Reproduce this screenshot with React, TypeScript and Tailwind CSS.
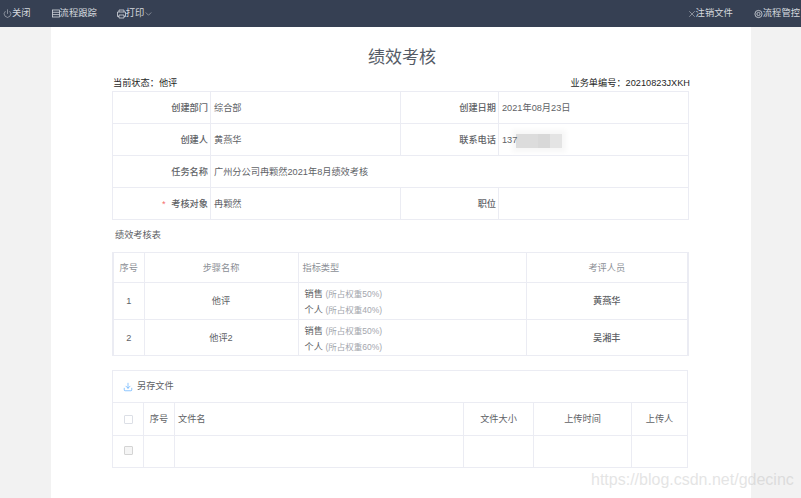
import { ChevronDown, Download, Power, X } from "lucide-react";

const font = { fontFamily: '"Liberation Sans", "Noto Sans CJK SC", sans-serif' };

const box = "border border-[#ebecf3] align-middle";
const td = `${box} pt-[2px]`;
const label = `${td} text-right pr-[2px] font-medium text-[#606266]`;
const value = `${td} text-left pl-[3px] text-[#606266]`;

const flows = [
    { no: 1, name: "他评", second: "个人", pct: "40%", person: "黄燕华", rowH: "h-[37px]" },
    { no: 2, name: "他评2", second: "个人", pct: "60%", person: "吴湘丰", rowH: "h-[36px]" },
];

const App = () => {
    return (
        <div className="flex flex-col w-[801px] h-[498px] overflow-hidden bg-[#f2f2f2] text-[9.2px] relative" style={font}>
            {/* top bar */}
            <div className="flex items-center justify-between h-[27px] bg-[#364053] text-[#d5d9df] text-[9.3px] shrink-0">
                <div className="flex items-center">
                    <span className="flex items-center ml-[3px]"><Power size={9} strokeWidth={1.4} />关闭</span>
                    <span className="flex items-center ml-[21px]">
                        <svg width="8" height="9" viewBox="0 0 8 9" fill="none" stroke="currentColor" strokeWidth="0.8"><rect x="0.5" y="1" width="7" height="7" /><path d="M0.5 3.3h7M0.5 5.6h7" /></svg>
                        流程跟踪
                    </span>
                    <span className="flex items-center ml-[20px]">
                        <svg width="9" height="10" viewBox="0 0 9 10" fill="none" stroke="currentColor" strokeWidth="0.8"><path d="M2 3V1h5v2M2 7.5H.5V3h8v4.5H7M2 6h5v3H2z" /></svg>
                        打印
                        <ChevronDown size={10} strokeWidth={1.1} className="ml-[-1px] w-[11px] text-[#e2e5ea]" />
                    </span>
                </div>
                <div className="flex items-center mr-[1px]">
                    <span className="flex items-center"><X size={10} strokeWidth={1.2} className="mr-[-1px]" />注销文件</span>
                    <span className="flex items-center ml-[21px]">
                        <svg width="9" height="10" viewBox="0 0 10 10" fill="none" stroke="currentColor" strokeWidth="0.9"><circle cx="5" cy="5" r="4" /><circle cx="5" cy="5" r="1.8" /></svg>
                        流程管控
                    </span>
                </div>
            </div>

            {/* paper */}
            <div className="ml-[51px] w-[700px] flex-1 bg-white pl-[61px] pr-[62px]">
                <h1 className="text-[17px] leading-[24px] font-normal text-center text-[#555b66] mt-[19px] ml-[3px]">绩效考核</h1>
                <div className="flex justify-between mt-[6px] h-[15px] items-center text-[#1f1f1f] -mr-[1px] ml-[1px]">
                    <span>当前状态：他评</span>
                    <span>业务单编号：20210823JXKH</span>
                </div>

                <table className="table-fixed border-collapse w-[576px]">
                    <colgroup>
                        <col className="w-[98px]" />
                        <col className="w-[190px]" />
                        <col className="w-[98px]" />
                        <col className="w-[190px]" />
                    </colgroup>
                    <tbody>
                        <tr className="h-[32px]">
                            <td className={label}>创建部门</td>
                            <td className={value}>综合部</td>
                            <td className={label}>创建日期</td>
                            <td className={value}>2021年08月23日</td>
                        </tr>
                        <tr className="h-[32px]">
                            <td className={label}>创建人</td>
                            <td className={value}>黄燕华</td>
                            <td className={label}>联系电话</td>
                            <td className={value}>
                                <span className="flex items-center">
                                    <span className="relative z-10">137</span>
                                    {/* blurred phone number */}
                                    <span className="flex h-[14px] -ml-[1px] shadow-[0_0_5px_4px_#f7f7f7]">
                                        <span className="w-[22px] bg-[#dcdcdc]" />
                                        <span className="w-[12px] bg-[#d8d8d8]" />
                                        <span className="w-[12px] bg-[#e4e4e4]" />
                                    </span>
                                </span>
                            </td>
                        </tr>
                        <tr className="h-[32px]">
                            <td className={label}>任务名称</td>
                            <td className={value} colSpan={3}>广州分公司冉颗然2021年8月绩效考核</td>
                        </tr>
                        <tr className="h-[32px]">
                            <td className={label}><span className="text-[#f56c6c] mr-[3px]">*</span> 考核对象</td>
                            <td className={value}>冉颗然</td>
                            <td className={label}>职位</td>
                            <td className={value}></td>
                        </tr>
                    </tbody>
                </table>

                <div className="h-[32px] flex items-center pl-[3px] text-[#606266]">绩效考核表</div>

                <table className="table-fixed border-collapse w-[576px] border-l-2 border-r-2 border-[#ebecf3] text-[#606266]">
                    <colgroup>
                        <col className="w-[31px]" />
                        <col className="w-[154px]" />
                        <col className="w-[228px]" />
                        <col className="w-[162px]" />
                    </colgroup>
                    <thead>
                        <tr className="h-[30px] text-[#8c8f96]">
                            <th className={`${td} font-normal`}>序号</th>
                            <th className={`${td} font-normal`}>步骤名称</th>
                            <th className={`${td} font-normal text-left pl-[4px]`}>指标类型</th>
                            <th className={`${td} font-normal`}>考评人员</th>
                        </tr>
                    </thead>
                    <tbody>
                        {flows.map((f) => (
                            <tr className={f.rowH} key={f.no}>
                                <td className={`${td} text-center`}>{f.no}</td>
                                <td className={`${td} text-center`}>{f.name}</td>
                                <td className={`${box} pl-[6px] leading-[16px]`}>
                                    <div className="pt-[1px] -mb-[1px]">销售 <span className="text-[#a3a6ad] text-[8.5px]">(所占权重50%)</span></div>
                                    <div className="pt-[1px] -mb-[1px]">{f.second} <span className="text-[#a3a6ad] text-[8.5px]">(所占权重{f.pct})</span></div>
                                </td>
                                <td className={`${td} text-center font-medium`}>{f.person}</td>
                            </tr>
                        ))}
                    </tbody>
                </table>

                <div className="w-[576px] mt-[14px] text-[#606266]">
                    <div className="flex items-center h-[32px] border border-[#ebecf3] border-b-0 pl-[10px] pt-[1px] gap-[4px]">
                        <Download size={10} strokeWidth={1.4} className="text-[#409eff]" />
                        另存文件
                    </div>
                    <table className="table-fixed border-collapse w-full">
                        <colgroup>
                            <col className="w-[31px]" />
                            <col className="w-[31px]" />
                            <col className="w-[289px]" />
                            <col className="w-[70px]" />
                            <col className="w-[98px]" />
                            <col className="w-[56px]" />
                        </colgroup>
                        <thead>
                            <tr className="h-[33px]">
                                <th className={`${box} font-normal`}><span className="block w-[9px] h-[9px] mx-auto border border-[#dcdfe6] rounded-[1px]" /></th>
                                <th className={`${td} font-normal`}>序号</th>
                                <th className={`${td} font-normal text-left pl-[3px]`}>文件名</th>
                                <th className={`${td} font-normal`}>文件大小</th>
                                <th className={`${td} font-normal`}>上传时间</th>
                                <th className={`${td} font-normal`}>上传人</th>
                            </tr>
                        </thead>
                        <tbody>
                            <tr className="h-[32px]">
                                <td className={box}><span className="block w-[9px] h-[9px] mx-auto -mt-[2px] border border-[#d4d4d4] bg-[#f5f5f5] rounded-[1px]" /></td>
                                <td className={box}></td>
                                <td className={box}></td>
                                <td className={box}></td>
                                <td className={box}></td>
                                <td className={box}></td>
                            </tr>
                        </tbody>
                    </table>
                </div>
            </div>

            {/* csdn watermark */}
            <div className="absolute left-[591px] top-[470px] text-[16px] leading-[20px] text-[#b4b4b4] opacity-35 whitespace-nowrap">https://blog.csdn.net/gdecinc</div>
        </div>
    );
};

export default App;
